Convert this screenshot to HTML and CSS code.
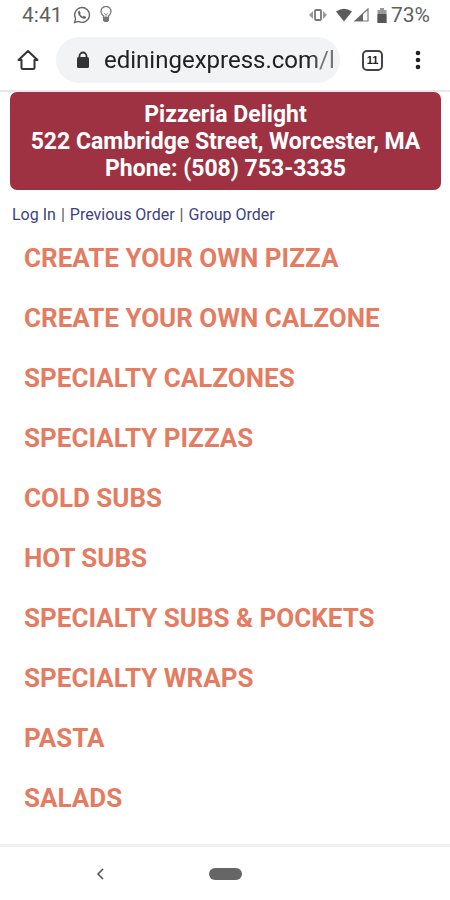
FILE: index.html
```html
<!DOCTYPE html>
<html lang="en">
  <head>
    <meta charset="UTF-8" />
    <meta name="viewport" content="width=device-width, initial-scale=1.0" />
    <title>Pizzeria Delight</title>
    <link rel="stylesheet" href="styles.css">
  </head>
  <body>
    <!-- Phone status bar -->
    <div class="status-bar">
      <span class="clock">4:41</span>
      <svg class="chat-icon" width="18" height="18" viewBox="0 0 18 18">
        <path d="M1.5 16.5l1.1-4A7.4 7.4 0 1 1 5.5 15.400z" fill="none" stroke="#666" stroke-width="1.300" />
        <path d="M6.300 4.600l1.500 2.300-.8 1.200c.6 1.200 1.500 2.100 2.800 2.700l1.100-1 2.300 1.200c-.2 1.400-1.400 2-2.600 1.700C7.800 12 5.700 9.900 5.100 7.500c-.3-1.200.2-2.400 1.200-2.900z" fill="#666" />
      </svg>
      <svg width="12" height="18" viewBox="0 0 12 18">
        <path d="M3.500 11.500v-1.800a5 5 0 1 1 5 0v1.800z" fill="none" stroke="#777" stroke-width="1.300" />
        <path d="M4 7l2 2 2-2M6 9v3" fill="none" stroke="#999" />
        <path d="M3 11h6v3.500L7.500 16h-3L3 14.500z" fill="#777" />
      </svg>
      <div class="status-right">
        <svg class="vibrate-icon" width="18" height="14" viewBox="0 0 18 14">
          <rect x="6" y="2" width="6" height="10" rx="1" fill="none" stroke="#777" stroke-width="1.800" />
          <path d="M4 3v8L0 7zM14 3v8l4-4z" fill="#999" />
        </svg>
        <svg class="wifi-icon" width="18" height="14" viewBox="0 0 18 14">
          <path d="M1 3.500Q9-2 17 3.500L9 13.500z" fill="#5c5c5c" />
        </svg>
        <svg width="15" height="14" viewBox="0 0 15 14">
          <path d="M1 13L14 1v12z" fill="none" stroke="#777" stroke-width="1.200" />
          <path d="M1 13L9 5.500V13z" fill="#666" />
        </svg>
        <svg class="battery-icon" width="10" height="15" viewBox="0 0 10 15">
          <path d="M3 0h4v2h2.500v13h-9V2H3z" fill="#999" />
          <path d="M.5 6h9v9h-9z" fill="#555" />
        </svg>
        <span class="percent">73%</span>
      </div>
    </div>

    <!-- Browser toolbar -->
    <div class="toolbar">
      <button class="icon-button" aria-label="Home">
        <svg width="22" height="22" viewBox="0 0 22 22">
          <path d="M4.500 11H1.500L11 2l9.500 9h-3v7.500q0 1.500-1.500 1.500H6q-1.500 0-1.500-1.500z" fill="none" stroke="#333" stroke-width="2" stroke-linejoin="round" />
        </svg>
      </button>
      <div class="address">
        <svg width="14" height="18" viewBox="0 0 14 18">
          <path d="M3.500 8V5a3.500 3.500 0 0 1 7 0v3" fill="none" stroke="#333" stroke-width="1.800" />
          <rect x="1" y="6" width="12" height="11" rx="1.500" fill="#333" />
        </svg>
        <input class="url" type="text" value="ediningexpress.com/l" aria-label="Address" />
      </div>
      <button class="icon-button tabs-button" aria-label="Tabs">
        <span class="tab-count">11</span>
      </button>
      <button class="icon-button menu-button" aria-label="More">
        <svg width="6" height="20" viewBox="0 0 6 20">
          <circle cx="3" cy="3" r="2.300" fill="#222" />
          <circle cx="3" cy="10" r="2.300" fill="#222" />
          <circle cx="3" cy="17" r="2.300" fill="#222" />
        </svg>
      </button>
    </div>

    <main>
      <h1 class="banner">
        Pizzeria Delight<br />
        522 Cambridge Street, Worcester, MA<br />
        Phone: (508) 753-3335
      </h1>
      <div class="account-links">
        <a href="#">Log In</a><span>|</span><a href="#">Previous Order</a><span>|</span><a href="#">Group Order</a>
      </div>
      <ul class="menu">
        <li><a href="#">CREATE YOUR OWN PIZZA</a></li>
        <li><a href="#">CREATE YOUR OWN CALZONE</a></li>
        <li><a href="#">SPECIALTY CALZONES</a></li>
        <li><a href="#">SPECIALTY PIZZAS</a></li>
        <li><a href="#">COLD SUBS</a></li>
        <li><a href="#">HOT SUBS</a></li>
        <li><a href="#">SPECIALTY SUBS &amp; POCKETS</a></li>
        <li><a href="#">SPECIALTY WRAPS</a></li>
        <li><a href="#">PASTA</a></li>
        <li><a href="#">SALADS</a></li>
      </ul>
    </main>

    <!-- System navigation -->
    <nav class="system-nav">
      <button class="icon-button back-button" aria-label="Back">
        <svg width="8" height="12" viewBox="0 0 8 12">
          <path d="M7 1L2 6l5 5" fill="none" stroke="#555" stroke-width="1.600" />
        </svg>
      </button>
      <button class="home-pill" aria-label="Home screen"></button>
    </nav>
  </body>
</html>
```

FILE: styles.css
```css
* {
  box-sizing: border-box;
}
body {
  font-family: Roboto, Arial, sans-serif;
  margin: 0;
  min-height: 100vh;
  display: flex;
  flex-direction: column;
  background-color: #fff;
}
svg {
  display: block;
  flex-shrink: 0;
}
.icon-button {
  display: flex;
  align-items: center;
  justify-content: center;
  padding: 0;
  border: none;
  background: none;
  cursor: pointer;
}

/* Status bar */
.status-bar {
  display: flex;
  align-items: center;
  height: 30px;
  padding: 0 20px 0 22px;
  color: #5f5f5f;
  font-size: 21px;
}
.chat-icon {
  margin: 0 9px 0 10px;
}
.status-right {
  display: flex;
  align-items: center;
  margin-left: auto;
}
.vibrate-icon {
  margin-right: 8px;
}
.wifi-icon {
  margin-right: 1px;
}
.battery-icon {
  margin: 0 4px 0 8px;
}

/* Toolbar */
.toolbar {
  display: flex;
  align-items: center;
  height: 62px;
  padding: 0 29px 0 17px;
  border-bottom: 2px solid #e8e8e8;
}
.address {
  display: flex;
  align-items: center;
  flex: 1;
  min-width: 0;
  height: 46px;
  margin: 0 22px 0 17px;
  padding: 0 4px 0 20px;
  border-radius: 23px;
  background-color: #f1f3f4;
}
.url {
  flex: 1;
  min-width: 0;
  height: 32px;
  margin-left: 14px;
  padding: 0;
  border: none;
  outline: none;
  background: none;
  color: #202124;
  font-family: inherit;
  font-size: 24px;
  /* fade out the end of a long address */
  mask-image: linear-gradient(to right, #000 90%, rgba(0, 0, 0, 0.6) 93%);
}
.tab-count {
  display: flex;
  align-items: center;
  justify-content: center;
  width: 21px;
  height: 21px;
  border: 2px solid #444;
  border-radius: 5px;
  color: #222;
  font-size: 11px;
  font-weight: bold;
}
.menu-button {
  margin-left: 32px;
}

/* Page content */
main {
  flex: 1;
}
.banner {
  margin: 0 9px 0 10px;
  padding: 9px 0 8px;
  border-radius: 7px;
  background-color: #9f3242;
  color: #fff;
  font-size: 23px;
  font-weight: bold;
  line-height: 27px;
  text-align: center;
}
.account-links {
  display: flex;
  gap: 5px;
  padding: 14px 12px 0;
  color: #555;
  font-size: 16px;
  line-height: 21px;
}
.account-links a {
  color: #3d4182;
  text-decoration: none;
}
.menu {
  margin: 0;
  padding: 3px 24px 0;
  list-style: none;
}
.menu li {
  height: 60px;
}
.menu a {
  color: #e47c62;
  font-size: 26px;
  font-weight: bold;
  line-height: 60px;
  text-decoration: none;
}

/* System navigation */
.system-nav {
  display: grid;
  grid-template-columns: 1fr auto 1fr;
  align-items: center;
  height: 56px;
  border-top: 3px solid #f1f1f1;
}
.back-button {
  width: 24px;
  height: 32px;
  margin-right: 8px;
  justify-self: center;
}
.home-pill {
  width: 33px;
  height: 12px;
  padding: 0;
  border: none;
  border-radius: 6px;
  background-color: #666;
}
```
